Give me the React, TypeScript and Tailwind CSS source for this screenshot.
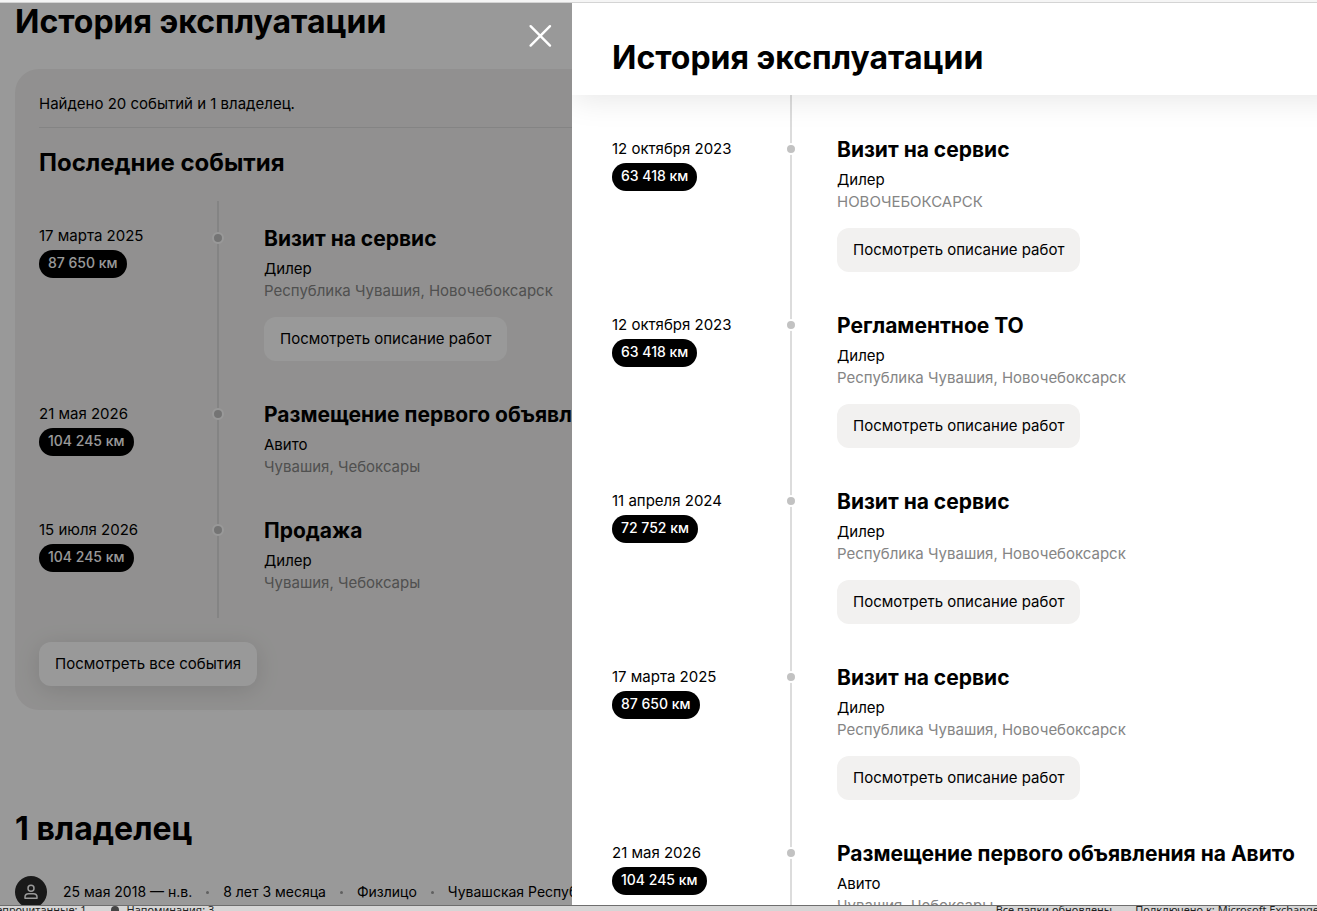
import React from "react";

type HistoryEvent = {
  date: string;
  mileage: string;
  title: string;
  source: string;
  place: string;
  hasDetails?: boolean;
};

const recentEvents: HistoryEvent[] = [
  { date: "17 марта 2025", mileage: "87 650 км", title: "Визит на сервис", source: "Дилер", place: "Республика Чувашия, Новочебоксарск", hasDetails: true },
  { date: "21 мая 2026", mileage: "104 245 км", title: "Размещение первого объявления на Авито", source: "Авито", place: "Чувашия, Чебоксары" },
  { date: "15 июля 2026", mileage: "104 245 км", title: "Продажа", source: "Дилер", place: "Чувашия, Чебоксары" },
];

const allEvents: HistoryEvent[] = [
  { date: "12 октября 2023", mileage: "63 418 км", title: "Визит на сервис", source: "Дилер", place: "НОВОЧЕБОКСАРСК", hasDetails: true },
  { date: "12 октября 2023", mileage: "63 418 км", title: "Регламентное ТО", source: "Дилер", place: "Республика Чувашия, Новочебоксарск", hasDetails: true },
  { date: "11 апреля 2024", mileage: "72 752 км", title: "Визит на сервис", source: "Дилер", place: "Республика Чувашия, Новочебоксарск", hasDetails: true },
  { date: "17 марта 2025", mileage: "87 650 км", title: "Визит на сервис", source: "Дилер", place: "Республика Чувашия, Новочебоксарск", hasDetails: true },
  { date: "21 мая 2026", mileage: "104 245 км", title: "Размещение первого объявления на Авито", source: "Авито", place: "Чувашия, Чебоксары" },
];

const ownerFacts = ["25 мая 2018 — н.в.", "8 лет 3 месяца", "Физлицо", "Чувашская Республика"];

function TimelineRow({ event, buttonClass, first, last }: { event: HistoryEvent; buttonClass: string; first: boolean; last: boolean }) {
  const bottomPadding = last ? "pb-6" : event.hasDetails ? "pb-10" : "pb-[39px]";
  return (
    <li className="flex">
      <div className={`w-[173px] shrink-0 ${first ? "pt-[22px]" : ""}`}>
        <div className="leading-[26px]">{event.date}</div>
        <div className="mt-px flex">
          <span className="h-7 rounded-full bg-black px-[9px] text-sm font-medium leading-[26px] text-white">{event.mileage}</span>
        </div>
      </div>
      <div className="relative flex w-3 shrink-0 justify-center">
        <div className="w-0.5 bg-[#dcdcdc]" />
        <span className={`absolute left-0 h-3 w-3 rounded-full border-2 border-white bg-[#c2c2c2] ${first ? "top-[31px]" : "top-[7px]"}`} />
      </div>
      <div className={`ml-10 min-w-0 flex-1 ${first ? "pt-6" : ""} ${bottomPadding}`}>
        <h3 className="truncate text-[21px] font-bold leading-7">{event.title}</h3>
        <p className="mt-[5px] leading-[22px]">{event.source}</p>
        <p className="leading-[22px] text-[#858585]">{event.place}</p>
        {event.hasDetails && (
          <button type="button" className={`mt-[15px] h-11 rounded-xl px-4 ${buttonClass}`}>
            Посмотреть описание работ
          </button>
        )}
      </div>
    </li>
  );
}

function Timeline({ events, buttonClass, continued = false }: { events: HistoryEvent[]; buttonClass: string; continued?: boolean }) {
  return (
    <ol>
      {continued && (
        <li className="flex" aria-hidden="true">
          <div className="w-[173px] shrink-0" />
          <div className="flex h-[41px] w-3 justify-center">
            <div className="w-0.5 bg-[#dcdcdc]" />
          </div>
        </li>
      )}
      {events.map((event, i) => (
        <TimelineRow key={i} event={event} buttonClass={buttonClass} first={i === 0 && !continued} last={i === events.length - 1} />
      ))}
    </ol>
  );
}

function ReportPage() {
  return (
    <main className="px-[15px]">
      <h1 className="text-[32px] font-bold leading-[38px]">История эксплуатации</h1>
      <section className="mt-7 rounded-3xl bg-[#f2f1f0] p-6">
        <p className="border-b border-[#dcdcdc] pb-3 leading-[22px]">Найдено 20 событий и 1 владелец.</p>
        <h2 className="mb-6 mt-[21px] text-2xl font-bold leading-7">Последние события</h2>
        <Timeline events={recentEvents} buttonClass="bg-white" />
        <button type="button" className="mt-6 h-11 rounded-xl bg-white px-4 shadow-[0_4px_24px_rgba(0,0,0,0.12)]">
          Посмотреть все события
        </button>
      </section>
      <h1 className="mt-[100px] text-[32px] font-bold leading-[38px]">1 владелец</h1>
      <div className="mt-7 flex items-center whitespace-nowrap text-sm">
        <span className="mr-4 flex h-8 w-8 items-center justify-center rounded-full bg-[#2b2b2b]">
          <svg viewBox="0 0 16 16" className="h-4 w-4" fill="none" stroke="#fff" strokeWidth="1.5" strokeLinejoin="round">
            <circle cx="8" cy="4.2" r="3" />
            <path d="M2 14.3V13c0-2 1.6-3.3 3.6-3.3h4.8C12.4 9.7 14 11 14 13v1.3z" />
          </svg>
        </span>
        {ownerFacts.map((fact, i) => (
          <React.Fragment key={fact}>
            {i > 0 && <span className="mx-[14px] h-[3px] w-[3px] rounded-full bg-[#a0a0a0]" />}
            <span>{fact}</span>
          </React.Fragment>
        ))}
      </div>
    </main>
  );
}

function HistoryDrawer() {
  return (
    <div className="absolute inset-0 flex justify-end bg-black/40">
      <button type="button" aria-label="Закрыть" className="mr-4 mt-[17px] flex h-8 w-8 items-center justify-center">
        <svg viewBox="0 0 24 24" className="h-6 w-6" stroke="#fff" strokeWidth="2.4" strokeLinecap="round">
          <path d="M2.600 2.200 22 21.600M22 2.200 2.600 21.600" />
        </svg>
      </button>
      <aside className="flex w-[745px] flex-col overflow-hidden bg-white">
        <header className="relative z-10 -mr-8 bg-white px-10 pb-[18px] pt-9 shadow-[0_4px_32px_rgba(0,0,0,0.1)]">
          <h2 className="text-[32px] font-bold leading-[38px]">История эксплуатации</h2>
        </header>
        <div className="min-h-0 flex-1 overflow-y-auto pl-10 [scrollbar-width:none]">
          <Timeline events={allEvents} buttonClass="bg-[#f2f1f0]" continued />
        </div>
      </aside>
    </div>
  );
}

function StatusBar() {
  return (
    <footer className="flex h-1.5 shrink-0 items-start overflow-hidden whitespace-nowrap border-t border-[#6e6e6e] bg-[#d6d6d6] font-['Noto_Sans'] text-[11px] leading-[8px] text-[#222]">
      <span className="-ml-3">Непрочитанные: 1</span>
      <span className="ml-6 mr-2 h-2 w-2 shrink-0 rounded-full bg-[#444]" />
      <span>Напоминания: 3</span>
      <span className="ml-auto">Все папки обновлены.</span>
      <span className="-mr-0.5 ml-5">Подключено к: Microsoft Exchange</span>
    </footer>
  );
}

export default function App() {
  return (
    <div className="flex h-screen flex-col overflow-hidden bg-white font-['Inter','Noto_Sans',sans-serif] text-[15px] text-black">
      <div className="h-[3px] shrink-0 border-b border-[#d4d4d4] bg-[#f5f5f5]" />
      <div className="relative min-h-0 flex-1 overflow-hidden">
        <ReportPage />
        <HistoryDrawer />
      </div>
      <StatusBar />
    </div>
  );
}
